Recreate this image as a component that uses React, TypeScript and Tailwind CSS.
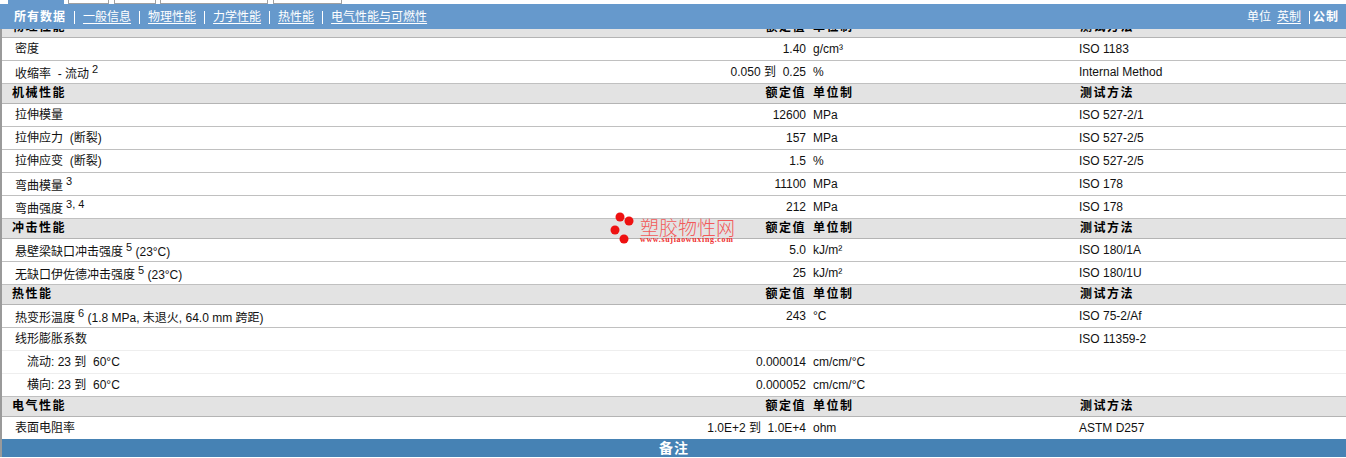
const font = "font-['Liberation_Sans','Noto_Sans_CJK_SC',sans-serif]";

type Row = { name: React.ReactNode; value?: string; unit?: string; method?: string; light?: boolean; hasSup?: boolean; indent?: boolean };
type Section = { title: string; rows: Row[] };

const Sup = ({ children }: { children: React.ReactNode }) => (
  <sup className="relative -top-[5px] ml-[3px] align-baseline text-[11px]">{children}</sup>
);

const sections: Section[] = [
  {
    title: "物理性能",
    rows: [
      { name: "密度", value: "1.40", unit: "g/cm³", method: "ISO 1183" },
      { name: <>收缩率 &nbsp;- 流动<Sup>2</Sup></>, value: "0.050 到  0.25", unit: "%", method: "Internal Method", hasSup: true },
    ],
  },
  {
    title: "机械性能",
    rows: [
      { name: "拉伸模量", value: "12600", unit: "MPa", method: "ISO 527-2/1" },
      { name: "拉伸应力  (断裂)", value: "157", unit: "MPa", method: "ISO 527-2/5" },
      { name: "拉伸应变  (断裂)", value: "1.5", unit: "%", method: "ISO 527-2/5" },
      { name: <>弯曲模量<Sup>3</Sup></>, value: "11100", unit: "MPa", method: "ISO 178", hasSup: true },
      { name: <>弯曲强度<Sup>3, 4</Sup></>, value: "212", unit: "MPa", method: "ISO 178", hasSup: true },
    ],
  },
  {
    title: "冲击性能",
    rows: [
      { name: <>悬壁梁缺口冲击强度<Sup>5</Sup> (23°C)</>, value: "5.0", unit: "kJ/m²", method: "ISO 180/1A", hasSup: true },
      { name: <>无缺口伊佐德冲击强度<Sup>5</Sup> (23°C)</>, value: "25", unit: "kJ/m²", method: "ISO 180/1U", hasSup: true },
    ],
  },
  {
    title: "热性能",
    rows: [
      { name: <>热变形温度<Sup>6</Sup> (1.8 MPa, 未退火, 64.0 mm 跨距)</>, value: "243", unit: "°C", method: "ISO 75-2/Af", hasSup: true },
      { name: "线形膨胀系数", method: "ISO 11359-2", light: true },
      { name: "流动: 23 到  60°C", value: "0.000014", unit: "cm/cm/°C", light: true, indent: true },
      { name: "横向: 23 到  60°C", value: "0.000052", unit: "cm/cm/°C", indent: true },
    ],
  },
  {
    title: "电气性能",
    rows: [{ name: "表面电阻率", value: "1.0E+2 到  1.0E+4", unit: "ohm", method: "ASTM D257" }],
  },
];

const cols = "grid grid-cols-[804px_273px_1fr]";

function Header({ title }: { title: string }) {
  return (
    <div className={`${cols} h-5 items-center border-b border-b-[#b4b4b4] bg-[#e3e3e3] text-[12px] font-bold leading-[15px] tracking-[1.5px] text-black`}>
      <div className="flex justify-between pl-[10px]">
        <span>{title}</span>
        <span>额定值</span>
      </div>
      <span className="pl-[7px]">单位制</span>
      <span className="pl-[1px]">测试方法</span>
    </div>
  );
}

function DataRow({ row, last }: { row: Row; last: boolean }) {
  const line = last ? "h-[22px]" : row.light ? "h-[23px] border-b border-b-[#eeeeee]" : "h-[23px] border-b border-b-[#c0c0c0]";
  const nameClass = row.indent ? "pl-3" : row.hasSup ? "mt-[4px]" : "mb-[1px]";
  return (
    <div className={`${cols} ${line} items-center pt-px text-[12px] leading-[15px] text-[#111]`}>
      <div className="flex items-center justify-between pl-[13px] whitespace-pre">
        <span className={nameClass}>{row.name}</span>
        <span>{row.value}</span>
      </div>
      <span className="pl-[7px]">{row.unit}</span>
      <span>{row.method}</span>
    </div>
  );
}

function NavLink({ children }: { children: React.ReactNode }) {
  return <a className="underline underline-offset-2">{children}</a>;
}

const tab = "h-1 border-x border-b border-[#a0a0a0]";

export default function App() {
  const nav = ["一般信息", "物理性能", "力学性能", "热性能", "电气性能与可燃性"];
  return (
    <div className={`${font} h-[458px] w-[1346px] overflow-hidden bg-white`}>
      <div className="flex h-1 items-start overflow-hidden pl-2">
        <div className="h-1 w-[56px] bg-[#6699cc]" />
        <div className={`${tab} ml-[4px] w-[41px]`} />
        <div className={`${tab} ml-[5px] w-[42px]`} />
        <div className={`${tab} ml-[4px] w-[108px]`} />
        <div className={`${tab} ml-[5px] w-[69px]`} />
      </div>
      <div className="relative z-10 flex h-[25px] items-center justify-between bg-[#6699cc] pl-[14px] pr-[7px] pt-px text-[12px] leading-[15px] text-white">
        <div className="flex items-center">
          <b className="tracking-[1px]">所有数据</b>
          {nav.map((n) => (
            <span key={n} className="flex items-center">
              <span className="mx-[8px] h-[13px] w-px bg-white" />
              <NavLink>{n}</NavLink>
            </span>
          ))}
        </div>
        <div className="flex items-center">
          <span>单位</span>
          <span className="ml-[6px]"><NavLink>英制</NavLink></span>
          <span className="ml-[8px] mr-[3px] h-[13px] w-px bg-white" />
          <b className="tracking-[1px]">公制</b>
        </div>
      </div>
      <div className="relative -mt-[11px] border-l-2 border-l-[#9a9a9a]">
        {sections.map((s, si) => (
          <div key={s.title}>
            <Header title={s.title} />
            {s.rows.map((r, i) => (
              <DataRow key={i} row={r} last={si === sections.length - 1 && i === s.rows.length - 1} />
            ))}
          </div>
        ))}
        <div className="flex h-[18px] items-center bg-[#4682b4] pl-[657px] text-[14px] font-bold tracking-[1px] text-white">备注</div>
        <div className="pointer-events-none absolute left-[606px] top-[192px] h-[36px] w-[130px]">
          <svg className="absolute left-0 top-0" width="30" height="36" viewBox="0 0 30 36">
            <circle cx="12" cy="7" r="4.5" fill="#ee1111" />
            <circle cx="21" cy="11" r="4.5" fill="#ee1111" />
            <circle cx="7" cy="20" r="4.5" fill="#ee1111" />
            <circle cx="16" cy="29" r="4.5" fill="#ee1111" />
          </svg>
          <div className="absolute left-[32px] top-[6px] whitespace-nowrap font-['Noto_Sans_CJK_SC',sans-serif] text-[19px] font-light leading-[22px] text-[#f25a5a]">塑胶物性网</div>
          <div className="absolute left-[32px] top-[26px] whitespace-nowrap font-['Liberation_Serif',serif] text-[8px] font-bold leading-[8px] tracking-[0.65px] text-[#f03030]">www.sujiaowuxing.com</div>
        </div>
      </div>
    </div>
  );
}
